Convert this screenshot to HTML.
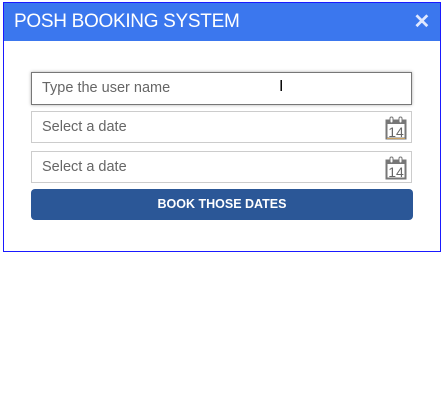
<!DOCTYPE html><html><head><style>
body{margin:0;background:#fff;font-family:"Liberation Sans",sans-serif;}
.dlg{position:absolute;left:3px;top:2px;width:436px;height:248px;border:1px solid #1a1aff;background:#fff;}
.hd{position:absolute;left:0;top:0;width:436px;height:38px;background:#3b77ee;color:#fff;font-size:19px;line-height:38px;padding-left:10px;box-sizing:border-box;letter-spacing:-0.3px;}
.x{position:absolute;right:10px;top:0;font-size:20px;font-weight:bold;color:#e0e8ff}
.in{position:absolute;left:27px;width:381px;box-sizing:border-box;border:1px solid #ccc;font-size:14.5px;color:#666;padding-left:10px;}
.cal{position:absolute;right:4px;top:4px}
.btn{position:absolute;left:27px;top:186px;width:382px;height:31px;background:#2b5797;border-radius:4px;color:#fff;font-weight:bold;font-size:12.5px;text-align:center;line-height:31px;}
</style></head><body>
<div class="dlg">
<div class="hd">POSH BOOKING SYSTEM<span class="x">✕</span></div>
<div class="in" style="top:69px;height:33px;line-height:31px;border-color:#777;box-shadow:0 0 3px #aaa">Type the user name</div>
<div class="in" style="top:108px;height:32px;line-height:30px">Select a date
<svg class="cal" width="22" height="24" viewBox="0 0 22 24"><rect x="1.5" y="4.5" width="19" height="18" fill="#fff" stroke="#777" stroke-width="2"/><rect x="1" y="4" width="20" height="4" fill="#777"/><rect x="5" y="1" width="3" height="6" rx="1.5" fill="#fff" stroke="#777"/><rect x="14" y="1" width="3" height="6" rx="1.5" fill="#fff" stroke="#777"/><text x="11" y="21" font-size="14" text-anchor="middle" fill="#666" font-family="Liberation Sans">14</text><line x1="2" y1="22.5" x2="20" y2="22.5" stroke="#c9a060"/></svg></div>
<div class="in" style="top:148px;height:32px;line-height:30px">Select a date
<svg class="cal" width="22" height="24" viewBox="0 0 22 24"><rect x="1.5" y="4.5" width="19" height="18" fill="#fff" stroke="#777" stroke-width="2"/><rect x="1" y="4" width="20" height="4" fill="#777"/><rect x="5" y="1" width="3" height="6" rx="1.5" fill="#fff" stroke="#777"/><rect x="14" y="1" width="3" height="6" rx="1.5" fill="#fff" stroke="#777"/><text x="11" y="21" font-size="14" text-anchor="middle" fill="#666" font-family="Liberation Sans">14</text></svg></div>
<div class="btn">BOOK THOSE DATES</div>
<div style="position:absolute;left:275px;top:75px;font-size:16px;color:#000">I</div>
</div>
</body></html>
